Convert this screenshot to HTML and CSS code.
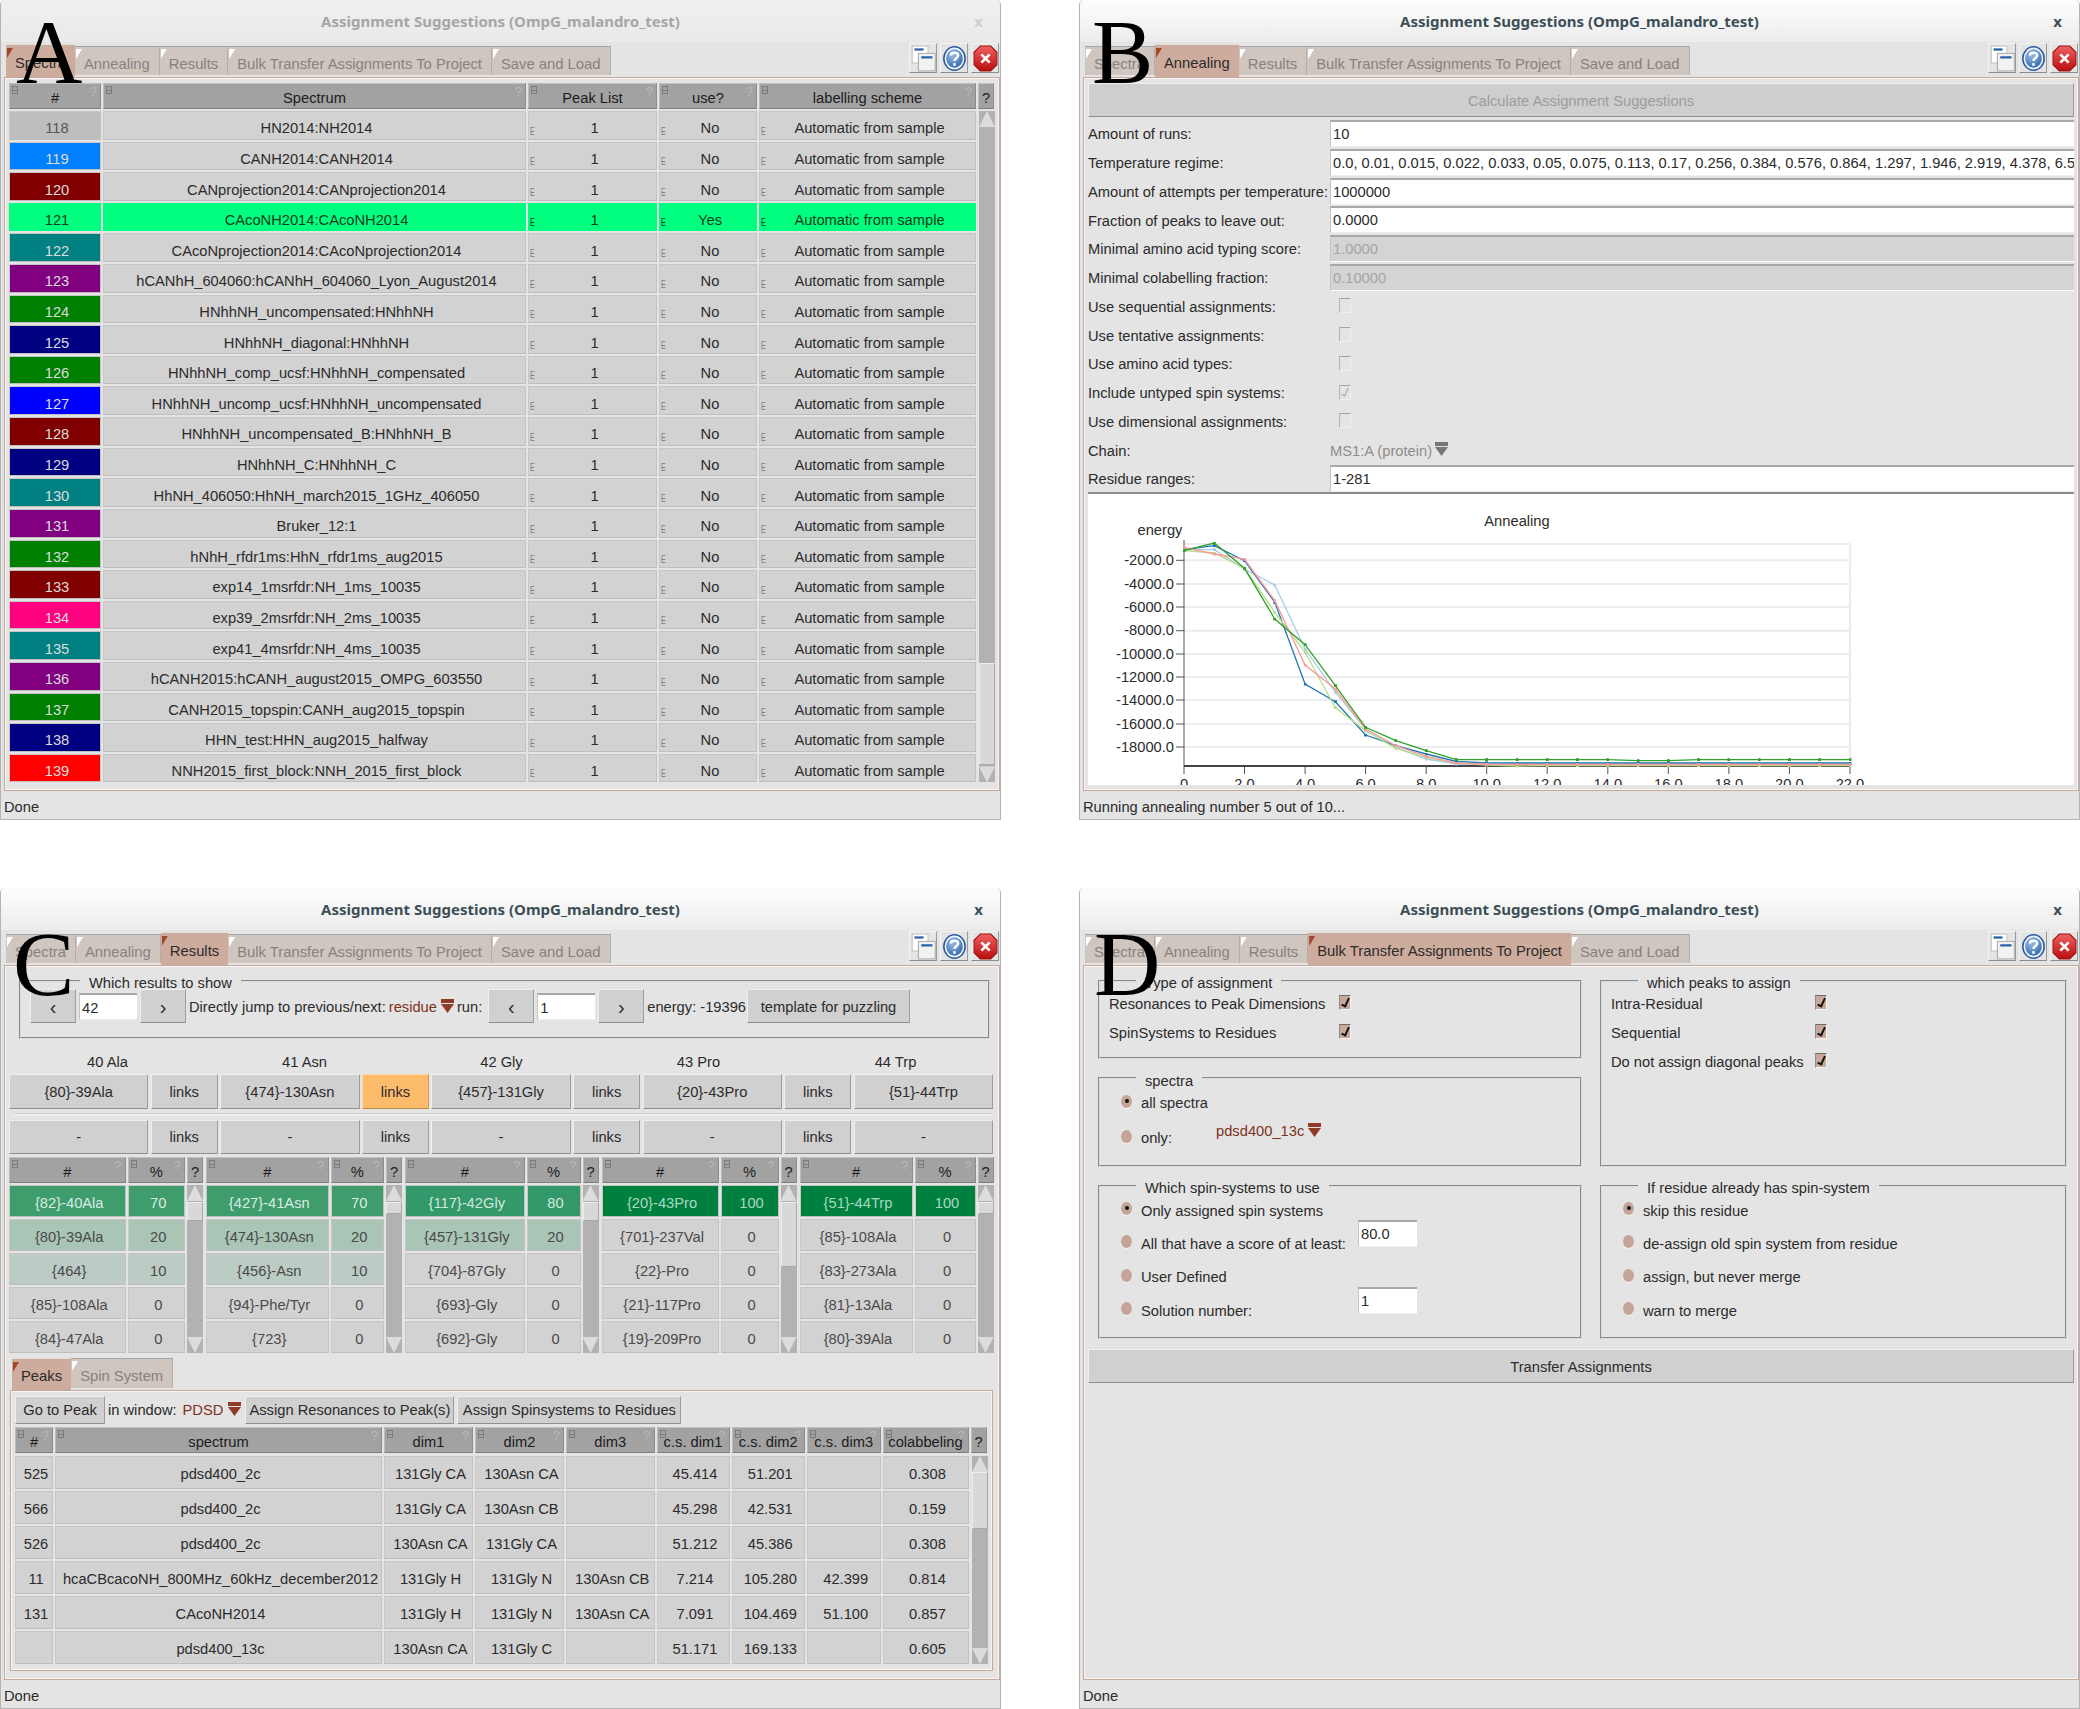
FILE: index.html
```html
<!DOCTYPE html>
<html>

<head>
    <title>Assignment Suggestions</title>
    <link rel="stylesheet" href="styles.css">
</head>

<body>
    <svg class="defs">
        <defs>
            <radialGradient id="blue-ball" cx="40%" cy="30%" r="80%">
                <stop offset="0" stop-color="#9cc0e8"/>
                <stop offset="1" stop-color="#2a62a8"/>
            </radialGradient>
            <linearGradient id="red-ball" x1="0" y1="0" x2="0" y2="1">
                <stop offset="0" stop-color="#f06060"/>
                <stop offset="1" stop-color="#b80f0f"/>
            </linearGradient>
            <symbol id="i-windows" viewBox="0 0 22 24">
                <rect x="1" y="1" width="14" height="15" fill="#fff" stroke="#c8c8c8"/>
                <rect x="3" y="3" width="8" height="2" fill="#2d5fa8"/>
                <rect x="6.500" y="7.500" width="15" height="15.500" fill="#f2f2f2" stroke="#b0b0b0"/>
                <rect x="9" y="10" width="10" height="2" fill="#2d5fa8"/>
            </symbol>
            <symbol id="i-help" viewBox="0 0 24 26">
                <ellipse cx="12" cy="13" rx="11" ry="12" fill="#2a5a9c"/>
                <ellipse cx="12" cy="13" rx="9.500" ry="10.500" fill="#eef4fb"/>
                <ellipse cx="12" cy="13" rx="8" ry="9" fill="url(#blue-ball)"/>
                <path d="M8.500 10 C8.500 6.500 15.500 6.500 15.500 10 C15.500 12.500 12 12.500 12 15.500" fill="none" stroke="#fff" stroke-width="2.400"/>
                <rect x="10.800" y="17.500" width="2.400" height="2.500" fill="#fff"/>
            </symbol>
            <symbol id="i-close" viewBox="0 0 24 26">
                <polygon points="7,1 17,1 23,7 23,19 17,25 7,25 1,19 1,7" fill="url(#red-ball)" stroke="#a01010"/>
                <path d="M8 9 L16 17 M16 9 L8 17" stroke="#fff" stroke-width="2.600"/>
            </symbol>
            <symbol id="i-pull" viewBox="0 0 13 14">
                <rect x="0" y="0" width="13" height="4" fill="currentColor"/>
                <polygon points="0,5 13,5 6.500,14" fill="currentColor"/>
            </symbol>
            <marker id="m1" markerWidth="3" markerHeight="3" refX="1.500" refY="1.500" markerUnits="userSpaceOnUse"><rect width="3" height="3" fill="#1f78b4"/></marker>
            <marker id="m2" markerWidth="3" markerHeight="3" refX="1.500" refY="1.500" markerUnits="userSpaceOnUse"><rect width="3" height="3" fill="#a6cee3"/></marker>
            <marker id="m3" markerWidth="3" markerHeight="3" refX="1.500" refY="1.500" markerUnits="userSpaceOnUse"><rect width="3" height="3" fill="#33a02c"/></marker>
            <marker id="m4" markerWidth="3" markerHeight="3" refX="1.500" refY="1.500" markerUnits="userSpaceOnUse"><rect width="3" height="3" fill="#b2df8a"/></marker>
            <marker id="m5" markerWidth="3" markerHeight="3" refX="1.500" refY="1.500" markerUnits="userSpaceOnUse"><rect width="3" height="3" fill="#fb9a99"/></marker>
        </defs>
    </svg>

    <div class="sheet">

        <!-- A: spectra tab, window not focused -->
        <div class="window inactive">
            <div class="big-letter letter-a">A</div>
            <div class="titlebar"><span></span><div class="title">Assignment Suggestions (OmpG_malandro_test)</div><div class="win-x">x</div></div>
            <div class="tabbar">
                <div class="tab on">Spectra</div>
                <div class="tab">Annealing</div>
                <div class="tab">Results</div>
                <div class="tab">Bulk Transfer Assignments To Project</div>
                <div class="tab">Save and Load</div>
                <div class="tools">
                    <div class="tool"><svg class="tool-icon"><use href="#i-windows"/></svg></div>
                    <div class="tool"><svg class="tool-icon"><use href="#i-help"/></svg></div>
                    <div class="tool"><svg class="tool-icon"><use href="#i-close"/></svg></div>
                </div>
            </div>
            <div class="panel">
                <div class="table spectra">
                    <div class="tr head">
                        <div class="th">#</div>
                        <div class="th">Spectrum</div>
                        <div class="th">Peak List</div>
                        <div class="th">use?</div>
                        <div class="th">labelling scheme</div>
                        <div class="th plain">?</div>
                    </div>
                    <div class="tbody">
                        <div class="rows">
                            <div class="tr"><div class="td sw c-silver">118</div><div class="td">HN2014:NH2014</div><div class="td e">1</div><div class="td e">No</div><div class="td e">Automatic from sample</div></div>
                            <div class="tr"><div class="td sw c-azure">119</div><div class="td">CANH2014:CANH2014</div><div class="td e">1</div><div class="td e">No</div><div class="td e">Automatic from sample</div></div>
                            <div class="tr"><div class="td sw c-maroon">120</div><div class="td">CANprojection2014:CANprojection2014</div><div class="td e">1</div><div class="td e">No</div><div class="td e">Automatic from sample</div></div>
                            <div class="tr picked"><div class="td">121</div><div class="td">CAcoNH2014:CAcoNH2014</div><div class="td e">1</div><div class="td e">Yes</div><div class="td e">Automatic from sample</div></div>
                            <div class="tr"><div class="td sw c-teal">122</div><div class="td">CAcoNprojection2014:CAcoNprojection2014</div><div class="td e">1</div><div class="td e">No</div><div class="td e">Automatic from sample</div></div>
                            <div class="tr"><div class="td sw c-purple">123</div><div class="td">hCANhH_604060:hCANhH_604060_Lyon_August2014</div><div class="td e">1</div><div class="td e">No</div><div class="td e">Automatic from sample</div></div>
                            <div class="tr"><div class="td sw c-green">124</div><div class="td">HNhhNH_uncompensated:HNhhNH</div><div class="td e">1</div><div class="td e">No</div><div class="td e">Automatic from sample</div></div>
                            <div class="tr"><div class="td sw c-navy">125</div><div class="td">HNhhNH_diagonal:HNhhNH</div><div class="td e">1</div><div class="td e">No</div><div class="td e">Automatic from sample</div></div>
                            <div class="tr"><div class="td sw c-green">126</div><div class="td">HNhhNH_comp_ucsf:HNhhNH_compensated</div><div class="td e">1</div><div class="td e">No</div><div class="td e">Automatic from sample</div></div>
                            <div class="tr"><div class="td sw c-blue">127</div><div class="td">HNhhNH_uncomp_ucsf:HNhhNH_uncompensated</div><div class="td e">1</div><div class="td e">No</div><div class="td e">Automatic from sample</div></div>
                            <div class="tr"><div class="td sw c-maroon">128</div><div class="td">HNhhNH_uncompensated_B:HNhhNH_B</div><div class="td e">1</div><div class="td e">No</div><div class="td e">Automatic from sample</div></div>
                            <div class="tr"><div class="td sw c-navy">129</div><div class="td">HNhhNH_C:HNhhNH_C</div><div class="td e">1</div><div class="td e">No</div><div class="td e">Automatic from sample</div></div>
                            <div class="tr"><div class="td sw c-teal">130</div><div class="td">HhNH_406050:HhNH_march2015_1GHz_406050</div><div class="td e">1</div><div class="td e">No</div><div class="td e">Automatic from sample</div></div>
                            <div class="tr"><div class="td sw c-purple">131</div><div class="td">Bruker_12:1</div><div class="td e">1</div><div class="td e">No</div><div class="td e">Automatic from sample</div></div>
                            <div class="tr"><div class="td sw c-green">132</div><div class="td">hNhH_rfdr1ms:HhN_rfdr1ms_aug2015</div><div class="td e">1</div><div class="td e">No</div><div class="td e">Automatic from sample</div></div>
                            <div class="tr"><div class="td sw c-maroon">133</div><div class="td">exp14_1msrfdr:NH_1ms_10035</div><div class="td e">1</div><div class="td e">No</div><div class="td e">Automatic from sample</div></div>
                            <div class="tr"><div class="td sw c-pink">134</div><div class="td">exp39_2msrfdr:NH_2ms_10035</div><div class="td e">1</div><div class="td e">No</div><div class="td e">Automatic from sample</div></div>
                            <div class="tr"><div class="td sw c-teal">135</div><div class="td">exp41_4msrfdr:NH_4ms_10035</div><div class="td e">1</div><div class="td e">No</div><div class="td e">Automatic from sample</div></div>
                            <div class="tr"><div class="td sw c-purple">136</div><div class="td">hCANH2015:hCANH_august2015_OMPG_603550</div><div class="td e">1</div><div class="td e">No</div><div class="td e">Automatic from sample</div></div>
                            <div class="tr"><div class="td sw c-green">137</div><div class="td">CANH2015_topspin:CANH_aug2015_topspin</div><div class="td e">1</div><div class="td e">No</div><div class="td e">Automatic from sample</div></div>
                            <div class="tr"><div class="td sw c-navy">138</div><div class="td">HHN_test:HHN_aug2015_halfway</div><div class="td e">1</div><div class="td e">No</div><div class="td e">Automatic from sample</div></div>
                            <div class="tr"><div class="td sw c-red">139</div><div class="td">NNH2015_first_block:NNH_2015_first_block</div><div class="td e">1</div><div class="td e">No</div><div class="td e">Automatic from sample</div></div>
                        </div>
                        <div class="scroll"><i class="up"></i><b class="thumb thumb-spectra"></b><i class="down"></i></div>
                    </div>
                </div>
            </div>
            <div class="status">Done</div>
        </div>

        <!-- B: annealing tab -->
        <div class="window">
            <div class="big-letter letter-b">B</div>
            <div class="titlebar"><span></span><div class="title">Assignment Suggestions (OmpG_malandro_test)</div><div class="win-x">x</div></div>
            <div class="tabbar">
                <div class="tab">Spectra</div>
                <div class="tab on">Annealing</div>
                <div class="tab">Results</div>
                <div class="tab">Bulk Transfer Assignments To Project</div>
                <div class="tab">Save and Load</div>
                <div class="tools">
                    <div class="tool"><svg class="tool-icon"><use href="#i-windows"/></svg></div>
                    <div class="tool"><svg class="tool-icon"><use href="#i-help"/></svg></div>
                    <div class="tool"><svg class="tool-icon"><use href="#i-close"/></svg></div>
                </div>
            </div>
            <div class="panel annealing">
                <div class="btn wide disabled">Calculate Assignment Suggestions</div>
                <div class="form">
                    <div class="label">Amount of runs:</div><div class="entry">10</div>
                    <div class="label">Temperature regime:</div><div class="entry">0.0, 0.01, 0.015, 0.022, 0.033, 0.05, 0.075, 0.113, 0.17, 0.256, 0.384, 0.576, 0.864, 1.297, 1.946, 2.919, 4.378, 6.568, 9.852</div>
                    <div class="label">Amount of attempts per temperature:</div><div class="entry">1000000</div>
                    <div class="label">Fraction of peaks to leave out:</div><div class="entry">0.0000</div>
                    <div class="label">Minimal amino acid typing score:</div><div class="entry off">1.0000</div>
                    <div class="label">Minimal colabelling fraction:</div><div class="entry off">0.10000</div>
                    <div class="label">Use sequential assignments:</div><div class="box-cell"><span class="check off"></span></div>
                    <div class="label">Use tentative assignments:</div><div class="box-cell"><span class="check off"></span></div>
                    <div class="label">Use amino acid types:</div><div class="box-cell"><span class="check off"></span></div>
                    <div class="label">Include untyped spin systems:</div><div class="box-cell"><span class="check off ticked"></span></div>
                    <div class="label">Use dimensional assignments:</div><div class="box-cell"><span class="check off"></span></div>
                    <div class="label">Chain:</div><div class="pull-cell grey">MS1:A (protein) <svg class="pull"><use href="#i-pull"/></svg></div>
                    <div class="label">Residue ranges:</div><div class="entry">1-281</div>
                </div>
                <div class="chart">
                    <svg class="plot" width="984" height="294">
                        <g class="plot-grid">
                            <path d="M96 52H762M762 52V274"/>
                            <path d="M96 68.300H762M96 92H762M96 115H762M96 138.700H762M96 162H762M96 185H762M96 208H762M96 232H762M96 255H762"/>
                        </g>
                        <g class="plot-axis">
                            <path d="M96 48V274M88 68.300H96M88 92H96M88 115H96M88 138.700H96M88 162H96M88 185H96M88 208H96M88 232H96M88 255H96"/>
                            <path d="M96 274V282M156.500 274V282M217.100 274V282M277.600 274V282M338.200 274V282M398.700 274V282M459.200 274V282M519.800 274V282M580.300 274V282M640.900 274V282M701.400 274V282M762 274V282"/>
                            <path class="plot-base" d="M96 274H762"/>
                        </g>
                        <polyline class="run" stroke="#a6cee3" marker-start="url(#m2)" marker-mid="url(#m2)" marker-end="url(#m2)" points="96,57.700 126.300,57.700 156.500,77 186.800,93 217.100,157 247.400,200.300 277.600,237 307.900,255.300 338.200,267 368.400,272 398.700,272 429,271.500 459.200,271.500 489.500,271.500 519.800,271.500 550,271.500 580.300,271.500 610.600,271.500 640.900,271.500 671.100,271.500 701.400,271.500 731.700,271.500 762,271.500"/>
                        <polyline class="run" stroke="#1f78b4" marker-start="url(#m1)" marker-mid="url(#m1)" marker-end="url(#m1)" points="96,57.700 126.300,53.700 156.500,68.700 186.800,110.300 217.100,192 247.400,209.700 277.600,243 307.900,253.700 338.200,262 368.400,269.500 398.700,270.800 429,271 459.200,271 489.500,271 519.800,271 550,271 580.300,271 610.600,271 640.900,271 671.100,271 701.400,271 731.700,271 762,271"/>
                        <polyline class="run" stroke="#b2df8a" marker-start="url(#m4)" marker-mid="url(#m4)" marker-end="url(#m4)" points="96,58.700 126.300,61 156.500,76.300 186.800,120.300 217.100,160.300 247.400,215.700 277.600,238.700 307.900,256.300 338.200,265.300 368.400,271 398.700,273 429,274 459.200,273.500 489.500,273.500 519.800,273.500 550,273.500 580.300,273.500 610.600,273.500 640.900,273.500 671.100,273.500 701.400,273.500 731.700,273.500 762,273.500"/>
                        <polyline class="run" stroke="#fb9a99" marker-start="url(#m5)" marker-mid="url(#m5)" marker-end="url(#m5)" points="96,55.300 126.300,62 156.500,67 186.800,108.700 217.100,173 247.400,197 277.600,237 307.900,253.700 338.200,264.300 368.400,271 398.700,272.500 429,272.500 459.200,272.500 489.500,272.500 519.800,272.500 550,272.500 580.300,272.500 610.600,272.500 640.900,272.500 671.100,272.500 701.400,272.500 731.700,272.500 762,272.500"/>
                        <polyline class="run" stroke="#33a02c" marker-start="url(#m3)" marker-mid="url(#m3)" marker-end="url(#m3)" points="96,58.700 126.300,51 156.500,76.300 186.800,127 217.100,152.700 247.400,193.700 277.600,235.300 307.900,248.700 338.200,258.700 368.400,267.700 398.700,267.700 429,267.700 459.200,267.700 489.500,267.700 519.800,267.700 550,268.700 580.300,268.700 610.600,267.700 640.900,267.700 671.100,267.700 701.400,267.700 731.700,267.700 762,267.700"/>
                        <g class="plot-text">
                            <text x="429" y="34" text-anchor="middle">Annealing</text>
                            <text x="72" y="43" text-anchor="middle">energy</text>
                            <g text-anchor="end">
                                <text x="86" y="73">-2000.0</text>
                                <text x="86" y="97">-4000.0</text>
                                <text x="86" y="120">-6000.0</text>
                                <text x="86" y="143">-8000.0</text>
                                <text x="86" y="167">-10000.0</text>
                                <text x="86" y="190">-12000.0</text>
                                <text x="86" y="213">-14000.0</text>
                                <text x="86" y="237">-16000.0</text>
                                <text x="86" y="260">-18000.0</text>
                            </g>
                            <g text-anchor="middle">
                                <text x="96" y="297">0</text>
                                <text x="156.500" y="297">2.0</text>
                                <text x="217.100" y="297">4.0</text>
                                <text x="277.600" y="297">6.0</text>
                                <text x="338.200" y="297">8.0</text>
                                <text x="398.700" y="297">10.0</text>
                                <text x="459.200" y="297">12.0</text>
                                <text x="519.800" y="297">14.0</text>
                                <text x="580.300" y="297">16.0</text>
                                <text x="640.900" y="297">18.0</text>
                                <text x="701.400" y="297">20.0</text>
                                <text x="762" y="297">22.0</text>
                            </g>
                        </g>
                    </svg>
                </div>
            </div>
            <div class="status">Running annealing number 5 out of 10...</div>
        </div>

        <!-- C: results tab -->
        <div class="window">
            <div class="big-letter letter-c">C</div>
            <div class="titlebar"><span></span><div class="title">Assignment Suggestions (OmpG_malandro_test)</div><div class="win-x">x</div></div>
            <div class="tabbar">
                <div class="tab">Spectra</div>
                <div class="tab">Annealing</div>
                <div class="tab on">Results</div>
                <div class="tab">Bulk Transfer Assignments To Project</div>
                <div class="tab">Save and Load</div>
                <div class="tools">
                    <div class="tool"><svg class="tool-icon"><use href="#i-windows"/></svg></div>
                    <div class="tool"><svg class="tool-icon"><use href="#i-help"/></svg></div>
                    <div class="tool"><svg class="tool-icon"><use href="#i-close"/></svg></div>
                </div>
            </div>
            <div class="panel results">
                <fieldset class="frame show-frame">
                    <legend>Which results to show</legend>
                    <div class="btn nav">&lsaquo;</div>
                    <div class="entry small-entry">42</div>
                    <div class="btn nav">&rsaquo;</div>
                    <span class="txt">Directly jump to previous/next:</span>
                    <span class="pick">residue <svg class="pull"><use href="#i-pull"/></svg></span>
                    <span class="txt">run:</span>
                    <div class="btn nav nav-run">&lsaquo;</div>
                    <div class="entry small-entry">1</div>
                    <div class="btn nav">&rsaquo;</div>
                    <span class="txt">energy: -19396</span>
                    <div class="btn puzzle">template for puzzling</div>
                </fieldset>

                <div class="residues">
                    <div>40 Ala</div><div>41 Asn</div><div>42 Gly</div><div>43 Pro</div><div>44 Trp</div>
                </div>
                <div class="cands">
                    <div class="btn">{80}-39Ala</div><div class="btn">links</div>
                    <div class="btn">{474}-130Asn</div><div class="btn orange">links</div>
                    <div class="btn">{457}-131Gly</div><div class="btn">links</div>
                    <div class="btn">{20}-43Pro</div><div class="btn">links</div>
                    <div class="btn">{51}-44Trp</div>
                </div>
                <div class="sep"></div>
                <div class="cands second">
                    <div class="btn">-</div><div class="btn">links</div>
                    <div class="btn">-</div><div class="btn">links</div>
                    <div class="btn">-</div><div class="btn">links</div>
                    <div class="btn">-</div><div class="btn">links</div>
                    <div class="btn">-</div>
                </div>

                <div class="scores">
                    <div class="table score score-1">
                        <div class="tr head"><div class="th">#</div><div class="th">%</div><div class="th plain">?</div></div>
                        <div class="tbody">
                            <div class="rows">
                                <div class="tr g70"><div class="td">{82}-40Ala</div><div class="td">70</div></div>
                                <div class="tr g20"><div class="td">{80}-39Ala</div><div class="td">20</div></div>
                                <div class="tr g10"><div class="td">{464}</div><div class="td">10</div></div>
                                <div class="tr"><div class="td">{85}-108Ala</div><div class="td">0</div></div>
                                <div class="tr"><div class="td">{84}-47Ala</div><div class="td">0</div></div>
                            </div>
                            <div class="scroll"><i class="up"></i><b class="thumb thumb-short"></b><i class="down"></i></div>
                        </div>
                    </div>
                    <div class="table score score-2">
                        <div class="tr head"><div class="th">#</div><div class="th">%</div><div class="th plain">?</div></div>
                        <div class="tbody">
                            <div class="rows">
                                <div class="tr g70"><div class="td">{427}-41Asn</div><div class="td">70</div></div>
                                <div class="tr g20"><div class="td">{474}-130Asn</div><div class="td">20</div></div>
                                <div class="tr g10"><div class="td">{456}-Asn</div><div class="td">10</div></div>
                                <div class="tr"><div class="td">{94}-Phe/Tyr</div><div class="td">0</div></div>
                                <div class="tr"><div class="td">{723}</div><div class="td">0</div></div>
                            </div>
                            <div class="scroll"><i class="up"></i><b class="thumb thumb-mini"></b><i class="down"></i></div>
                        </div>
                    </div>
                    <div class="table score score-3">
                        <div class="tr head"><div class="th">#</div><div class="th">%</div><div class="th plain">?</div></div>
                        <div class="tbody">
                            <div class="rows">
                                <div class="tr g80"><div class="td">{117}-42Gly</div><div class="td">80</div></div>
                                <div class="tr g20"><div class="td">{457}-131Gly</div><div class="td">20</div></div>
                                <div class="tr"><div class="td">{704}-87Gly</div><div class="td">0</div></div>
                                <div class="tr"><div class="td">{693}-Gly</div><div class="td">0</div></div>
                                <div class="tr"><div class="td">{692}-Gly</div><div class="td">0</div></div>
                            </div>
                            <div class="scroll"><i class="up"></i><b class="thumb thumb-short"></b><i class="down"></i></div>
                        </div>
                    </div>
                    <div class="table score score-4">
                        <div class="tr head"><div class="th">#</div><div class="th">%</div><div class="th plain">?</div></div>
                        <div class="tbody">
                            <div class="rows">
                                <div class="tr g100"><div class="td">{20}-43Pro</div><div class="td">100</div></div>
                                <div class="tr"><div class="td">{701}-237Val</div><div class="td">0</div></div>
                                <div class="tr"><div class="td">{22}-Pro</div><div class="td">0</div></div>
                                <div class="tr"><div class="td">{21}-117Pro</div><div class="td">0</div></div>
                                <div class="tr"><div class="td">{19}-209Pro</div><div class="td">0</div></div>
                            </div>
                            <div class="scroll"><i class="up"></i><b class="thumb thumb-long"></b><i class="down"></i></div>
                        </div>
                    </div>
                    <div class="table score score-5">
                        <div class="tr head"><div class="th">#</div><div class="th">%</div><div class="th plain">?</div></div>
                        <div class="tbody">
                            <div class="rows">
                                <div class="tr g100"><div class="td">{51}-44Trp</div><div class="td">100</div></div>
                                <div class="tr"><div class="td">{85}-108Ala</div><div class="td">0</div></div>
                                <div class="tr"><div class="td">{83}-273Ala</div><div class="td">0</div></div>
                                <div class="tr"><div class="td">{81}-13Ala</div><div class="td">0</div></div>
                                <div class="tr"><div class="td">{80}-39Ala</div><div class="td">0</div></div>
                            </div>
                            <div class="scroll"><i class="up"></i><b class="thumb thumb-mini"></b><i class="down"></i></div>
                        </div>
                    </div>
                </div>

                <div class="subtabs">
                    <div class="tab on">Peaks</div>
                    <div class="tab">Spin System</div>
                </div>
                <div class="subpanel">
                    <div class="peak-bar">
                        <div class="btn go">Go to Peak</div>
                        <span class="txt">in window:</span>
                        <span class="pick">PDSD <svg class="pull"><use href="#i-pull"/></svg></span>
                        <div class="btn assign-a">Assign Resonances to Peak(s)</div>
                        <div class="btn assign-b">Assign Spinsystems to Residues</div>
                    </div>
                    <div class="table peaks">
                        <div class="tr head">
                            <div class="th">#</div>
                            <div class="th">spectrum</div>
                            <div class="th">dim1</div>
                            <div class="th">dim2</div>
                            <div class="th">dim3</div>
                            <div class="th">c.s. dim1</div>
                            <div class="th">c.s. dim2</div>
                            <div class="th">c.s. dim3</div>
                            <div class="th">colabbeling</div>
                            <div class="th plain">?</div>
                        </div>
                        <div class="tbody">
                            <div class="rows">
                                <div class="tr"><div class="td">525</div><div class="td">pdsd400_2c</div><div class="td">131Gly CA</div><div class="td">130Asn CA</div><div class="td"></div><div class="td">45.414</div><div class="td">51.201</div><div class="td"></div><div class="td">0.308</div></div>
                                <div class="tr"><div class="td">566</div><div class="td">pdsd400_2c</div><div class="td">131Gly CA</div><div class="td">130Asn CB</div><div class="td"></div><div class="td">45.298</div><div class="td">42.531</div><div class="td"></div><div class="td">0.159</div></div>
                                <div class="tr"><div class="td">526</div><div class="td">pdsd400_2c</div><div class="td">130Asn CA</div><div class="td">131Gly CA</div><div class="td"></div><div class="td">51.212</div><div class="td">45.386</div><div class="td"></div><div class="td">0.308</div></div>
                                <div class="tr"><div class="td">11</div><div class="td">hcaCBcacoNH_800MHz_60kHz_december2012</div><div class="td">131Gly H</div><div class="td">131Gly N</div><div class="td">130Asn CB</div><div class="td">7.214</div><div class="td">105.280</div><div class="td">42.399</div><div class="td">0.814</div></div>
                                <div class="tr"><div class="td">131</div><div class="td">CAcoNH2014</div><div class="td">131Gly H</div><div class="td">131Gly N</div><div class="td">130Asn CA</div><div class="td">7.091</div><div class="td">104.469</div><div class="td">51.100</div><div class="td">0.857</div></div>
                                <div class="tr"><div class="td"></div><div class="td">pdsd400_13c</div><div class="td">130Asn CA</div><div class="td">131Gly C</div><div class="td"></div><div class="td">51.171</div><div class="td">169.133</div><div class="td"></div><div class="td">0.605</div></div>
                            </div>
                            <div class="scroll"><i class="up"></i><b class="thumb thumb-peaks"></b><i class="down"></i></div>
                        </div>
                    </div>
                </div>
            </div>
            <div class="status">Done</div>
        </div>

        <!-- D: bulk transfer tab -->
        <div class="window">
            <div class="big-letter letter-d">D</div>
            <div class="titlebar"><span></span><div class="title">Assignment Suggestions (OmpG_malandro_test)</div><div class="win-x">x</div></div>
            <div class="tabbar">
                <div class="tab">Spectra</div>
                <div class="tab">Annealing</div>
                <div class="tab">Results</div>
                <div class="tab on">Bulk Transfer Assignments To Project</div>
                <div class="tab">Save and Load</div>
                <div class="tools">
                    <div class="tool"><svg class="tool-icon"><use href="#i-windows"/></svg></div>
                    <div class="tool"><svg class="tool-icon"><use href="#i-help"/></svg></div>
                    <div class="tool"><svg class="tool-icon"><use href="#i-close"/></svg></div>
                </div>
            </div>
            <div class="panel bulk">
                <div class="bulk-grid">
                    <fieldset class="frame type-frame">
                        <legend>Type of assignment</legend>
                        <div class="opt-row"><span class="opt-label">Resonances to Peak Dimensions</span><span class="check ticked"></span></div>
                        <div class="opt-row"><span class="opt-label">SpinSystems to Residues</span><span class="check ticked"></span></div>
                    </fieldset>
                    <fieldset class="frame which-frame">
                        <legend>which peaks to assign</legend>
                        <div class="opt-row"><span class="opt-label">Intra-Residual</span><span class="check ticked"></span></div>
                        <div class="opt-row"><span class="opt-label">Sequential</span><span class="check ticked"></span></div>
                        <div class="opt-row"><span class="opt-label">Do not assign diagonal peaks</span><span class="check ticked"></span></div>
                    </fieldset>
                    <fieldset class="frame spectra-frame">
                        <legend>spectra</legend>
                        <div class="radio-row"><span class="radio chosen"></span>all spectra</div>
                        <div class="radio-row only-row"><span class="radio"></span>only:<span class="pick only-pick">pdsd400_13c <svg class="pull"><use href="#i-pull"/></svg></span></div>
                    </fieldset>
                    <fieldset class="frame spin-frame">
                        <legend>Which spin-systems to use</legend>
                        <div class="radio-row"><span class="radio chosen"></span>Only assigned spin systems</div>
                        <div class="radio-row"><span class="radio"></span><span class="spin-label">All that have a score of at least:</span><div class="entry spin-entry">80.0</div></div>
                        <div class="radio-row"><span class="radio"></span>User Defined</div>
                        <div class="radio-row"><span class="radio"></span><span class="spin-label">Solution number:</span><div class="entry spin-entry">1</div></div>
                    </fieldset>
                    <fieldset class="frame merge-frame">
                        <legend>If residue already has spin-system</legend>
                        <div class="radio-row"><span class="radio chosen"></span>skip this residue</div>
                        <div class="radio-row"><span class="radio"></span>de-assign old spin system from residue</div>
                        <div class="radio-row"><span class="radio"></span>assign, but never merge</div>
                        <div class="radio-row"><span class="radio"></span>warn to merge</div>
                    </fieldset>
                </div>
                <div class="btn wide transfer">Transfer Assignments</div>
            </div>
            <div class="status">Done</div>
        </div>

    </div>
</body>

</html>
```

FILE: styles.css
```css
body {
    margin: 0;
    background-color: white;
    font-family: "Liberation Sans", Arial, sans-serif;
    font-size: 14.700px;
    color: #2b2b2b;
}

.defs {
    position: absolute;
    width: 0;
    height: 0;
}

.sheet {
    display: grid;
    grid-template-columns: 1001px 1001px;
    grid-template-rows: 820px 821px;
    column-gap: 78px;
    row-gap: 68px;
}

/* Window frame */
.window {
    position: relative;
    display: flex;
    flex-direction: column;
    box-sizing: border-box;
    overflow: hidden;
    background-color: #e4e4e4;
    border: 1px solid #b4b4b4;
    border-top: none;
    border-radius: 5px 5px 0 0;
}

.big-letter {
    position: absolute;
    z-index: 5;
    font-family: "Liberation Serif", "Times New Roman", serif;
    font-size: 92px;
    line-height: 92px;
    color: black;
}

.letter-a { left: 15px; top: 6px; }
.letter-b { left: 12px; top: 6px; }
.letter-c { left: 12px; top: 30px; }
.letter-d { left: 14px; top: 30px; }

.titlebar {
    display: grid;
    grid-template-columns: 1fr auto 1fr;
    align-items: center;
    height: 42px;
    flex-shrink: 0;
    background: linear-gradient(#fdfdfd, #ececec);
}

.title {
    font-family: "Noto Sans", sans-serif;
    font-weight: bold;
    font-size: 15px;
    color: #3d4f56;
}

.win-x {
    justify-self: end;
    margin-right: 17px;
    font-family: "Noto Sans", sans-serif;
    font-weight: bold;
    font-size: 15px;
    color: #3d4f56;
}

.inactive .titlebar {
    background: linear-gradient(#f0f0f0, #e9e9e9);
}

.inactive .title {
    color: #a6a6a6;
}

.inactive .win-x {
    color: #cfcfcf;
}

/* Tabs */
.tabbar {
    display: flex;
    box-sizing: border-box;
    height: 35px;
    flex-shrink: 0;
    padding: 4px 0 2px 5px;
}

.tab {
    position: relative;
    display: flex;
    align-items: center;
    padding: 5px 9px 0;
    font-size: 14.800px;
    background-color: #cfc6c0;
    border-top: 1px solid #a9a5a2;
    border-right: 1px solid #b3aeaa;
    color: #85827f;
}

.tab::before {
    content: "";
    position: absolute;
    left: 1px;
    top: 2px;
    width: 6px;
    height: 10px;
    background-color: white;
    clip-path: polygon(0 0, 100% 0, 0 100%);
}

.tab.on {
    margin-top: -2px;
    margin-bottom: -2px;
    padding-top: 3px;
    background-color: #ceac9d;
    border-top: 1px solid #e8dcd6;
    border-right: none;
    color: #2b2b2b;
}

.tab.on::before {
    top: 3px;
    background-color: #a0472c;
}

.tools {
    display: flex;
    gap: 3px;
    margin-left: auto;
    margin-top: -3px;
    margin-right: 1px;
}

.tool {
    display: flex;
    align-items: center;
    justify-content: center;
    box-sizing: border-box;
    width: 28px;
    height: 30px;
    border: 1px solid;
    border-color: #f4f4f4 #9a9a9a #8c8c8c #f4f4f4;
}

.tool-icon {
    width: 25px;
    height: 27px;
}

/* Main panel under the tabs */
.panel {
    display: flex;
    flex-direction: column;
    box-sizing: border-box;
    flex: 1;
    min-height: 0;
    margin: 0 0 0 3px;
    padding: 5px 4px 0;
    border: 1px solid #c8a899;
    box-shadow: inset 0 0 0 1px #f6f6f6;
}

.status {
    display: flex;
    align-items: center;
    box-sizing: border-box;
    height: 28px;
    flex-shrink: 0;
    padding: 3px 0 0 3px;
}

/* Tables */
.tbody {
    display: flex;
    gap: 2px;
}

.rows {
    display: grid;
    row-gap: 2px;
    flex: 1;
}

.tr {
    display: grid;
    column-gap: 2px;
}

.head {
    margin-bottom: 2px;
}

.th {
    position: relative;
    display: flex;
    align-items: center;
    justify-content: center;
    box-sizing: border-box;
    padding-top: 4px;
    background-color: #a2a2a2;
    border: 1px solid;
    border-color: #c0c0c0 #8c8c8c #7e7e7e #bcbcbc;
    color: #1c1c1c;
}

.th::before {
    content: "";
    position: absolute;
    left: 2px;
    top: 2px;
    width: 4px;
    height: 6px;
    border: 1px solid #7c7c7c;
    background: linear-gradient(transparent 45%, #7c7c7c 45%, #7c7c7c 60%, transparent 60%);
}

.th::after {
    content: "?";
    position: absolute;
    right: 3px;
    top: 1px;
    font-size: 13px;
    line-height: 14px;
    color: #b9b9b9;
}

.th.plain::before,
.th.plain::after {
    display: none;
}

.td {
    position: relative;
    display: flex;
    align-items: center;
    justify-content: center;
    box-sizing: border-box;
    min-width: 0;
    padding: 3px 0 0 4px;
    white-space: nowrap;
    background-color: #d2d2d2;
    border: 1px solid;
    border-color: #c6c6c6 #c2c2c2 #bebebe #c8c8c8;
}

.e::before {
    content: "E";
    position: absolute;
    left: 1px;
    bottom: 2px;
    font-size: 10px;
    line-height: 10px;
    color: #7c7c7c;
    transform: scaleX(0.7);
    transform-origin: left;
}

.scroll {
    display: flex;
    flex-direction: column;
    flex-shrink: 0;
    width: 16px;
    background-color: #b2b2b2;
}

.up,
.down {
    flex-shrink: 0;
    height: 16px;
    background-color: #dcdcdc;
}

.up {
    clip-path: polygon(50% 0, 100% 100%, 0 100%);
}

.down {
    margin-top: auto;
    clip-path: polygon(0 0, 100% 0, 50% 100%);
}

.thumb {
    display: block;
    box-sizing: border-box;
    background-color: #d8d8d8;
    border: 1px solid;
    border-color: #ececec #a8a8a8 #a8a8a8 #ececec;
}

.thumb-spectra { margin-top: 536px; height: 102px; }
.thumb-short { margin-top: 1px; height: 19px; }
.thumb-mini { margin-top: 1px; height: 12px; }
.thumb-long { margin-top: 1px; height: 65px; }
.thumb-peaks { margin-top: 0; height: 57px; }

/* A: spectra list */
.spectra .tr {
    grid-template-columns: 92px 423px 129px 98px 217px;
}

.spectra .head {
    grid-template-columns: 92px 423px 129px 98px 217px 16px;
    height: 26px;
}

.spectra .rows {
    grid-auto-rows: 28.620px;
}

.spectra .td {
    padding-top: 6px;
}

.sw { color: #dcdcdc; }
.c-silver { background-color: #bebebe; color: #555; }
.c-azure { background-color: #0080ff; }
.c-maroon { background-color: #800000; }
.c-teal { background-color: #008080; }
.c-purple { background-color: #800080; }
.c-green { background-color: #008000; }
.c-navy { background-color: #000080; }
.c-blue { background-color: #0000ff; }
.c-pink { background-color: #ff0080; }
.c-red { background-color: #ff0000; }

.picked .td {
    background-color: #00ff7f;
    border-color: #00ff7f;
    color: #0b3a20;
}

.picked .e::before {
    color: #0b2a18;
}

/* Buttons */
.btn {
    display: flex;
    align-items: center;
    justify-content: center;
    box-sizing: border-box;
    background-color: #d0d0d0;
    border: 1px solid;
    border-color: #efefef #9c9c9c #8e8e8e #efefef;
    white-space: nowrap;
}

.btn.wide {
    height: 34px;
    padding-top: 2px;
    flex-shrink: 0;
}

.btn.disabled {
    background-color: #cecece;
    color: #9c9c9c;
}

.btn.orange {
    background-color: #fdbc6c;
    border-color: #ffd9a8 #c89a5c #b88a4c #ffd9a8;
}

/* B: annealing form */
.annealing .form {
    display: grid;
    grid-template-columns: 242px 1fr;
    grid-auto-rows: 28.750px;
    margin-top: 3px;
}

.label {
    display: flex;
    align-items: center;
    white-space: nowrap;
}

.entry {
    display: flex;
    align-items: center;
    box-sizing: border-box;
    height: 27px;
    min-width: 0;
    overflow: hidden;
    padding-left: 2px;
    white-space: nowrap;
    background-color: white;
    border-top: 2px solid #a8a8a8;
    border-left: 1px solid #c4c4c4;
    border-bottom: 1px solid #efefef;
}

.entry.off {
    background-color: #d4d4d4;
    border-bottom-color: white;
    color: #a4a4a4;
}

.box-cell {
    display: flex;
    align-items: center;
    padding: 0 0 2px 9px;
}

.pull-cell {
    display: flex;
    align-items: center;
    gap: 3px;
}

.grey {
    color: #8c8c8c;
}

.pull {
    width: 13px;
    height: 14px;
    margin-bottom: 3px;
    color: #8f3b25;
}

.grey .pull {
    color: #777;
}

.check {
    position: relative;
    display: inline-block;
    box-sizing: border-box;
    width: 12px;
    height: 15px;
    background-color: #c8a898;
    border: 1px solid;
    border-color: #6c6c6c #f4f4f4 #f4f4f4 #8c8c8c;
}

.check.off {
    background-color: #e4e4e4;
    border-color: #a4a4a4 #f0f0f0 #f0f0f0 #b4b4b4;
}

.check.ticked::after {
    content: "";
    position: absolute;
    left: 3px;
    top: 1px;
    width: 3px;
    height: 8px;
    border: solid #111;
    border-width: 0 2px 2px 0;
    transform: rotate(25deg);
}

.check.off.ticked::after {
    border-color: #a4a4a4;
    border-width: 0 1px 1px 0;
}

.chart {
    flex: 1;
    min-height: 0;
    overflow: hidden;
    margin: -2.250px 0 5px;
    background-color: white;
    border-top: 2px solid #8c8c8c;
}

.plot {
    display: block;
    margin-top: -2px;
}

.plot-grid path {
    fill: none;
    stroke: #ececec;
    stroke-width: 2;
}

.plot-axis path {
    fill: none;
    stroke: #555;
    stroke-width: 1;
}

.plot-axis .plot-base {
    stroke: #444;
    stroke-width: 2;
}

.run {
    fill: none;
    stroke-width: 1.300;
}

.plot-text text {
    font-family: "Liberation Sans", Arial, sans-serif;
    font-size: 14.700px;
    fill: #2b2b2b;
}

/* C: results */
.results {
    padding-top: 0;
}

.frame {
    box-sizing: border-box;
    min-width: 0;
    margin: 0;
    border: 2px groove #dcdcdc;
}

.frame legend {
    position: relative;
    top: 3px;
    padding: 0 9px;
    margin-left: 27px;
    line-height: 17px;
    white-space: nowrap;
}

.show-frame {
    display: flex;
    align-items: center;
    height: 67px;
    margin: 6px 5px 0 10px;
    padding: 0 0 1px 9px;
    gap: 3px;
}

.show-frame legend {
    margin-left: 50px;
}

.btn.nav {
    width: 46px;
    height: 34px;
    padding-top: 3px;
    font-size: 20px;
}

.nav-run {
    margin-left: 3px;
}

.small-entry {
    width: 58px;
    height: 27px;
}

.show-frame .txt,
.show-frame .pick {
    padding-top: 2px;
}

.show-frame .btn.puzzle,
.show-frame .entry {
    padding-top: 2px;
}

.txt,
.pick {
    white-space: nowrap;
}

.pick {
    display: inline-flex;
    align-items: center;
    gap: 4px;
    color: #7c3220;
}

.btn.puzzle {
    width: 163px;
    height: 34px;
    margin-left: -2px;
}

.residues {
    display: grid;
    grid-template-columns: repeat(5, 197px);
    margin-top: 10px;
    height: 25px;
    align-items: center;
    text-align: center;
}

.cands {
    display: grid;
    grid-template-columns: 139.400px 67px 139.400px 67px 139.400px 67px 139.400px 67px 139.400px;
    column-gap: 2.400px;
    height: 35px;
}

.cands.second {
    height: 34px;
}

.sep {
    height: 2px;
    margin: 4px 4px 4px 5px;
    background-color: #f0f0f0;
    border-top: 1px solid #cfcfcf;
}

.scores {
    display: flex;
    gap: 3px;
    margin-top: 3px;
}

.score .head {
    height: 26px;
    margin-bottom: 2px;
}

.score .rows {
    grid-auto-rows: 32px;
}

.score-1 .tr { grid-template-columns: 116.500px 57.500px; }
.score-1 .head { grid-template-columns: 116.500px 57.500px 16px; }
.score-2 .tr { grid-template-columns: 122.500px 53.500px; }
.score-2 .head { grid-template-columns: 122.500px 53.500px 16px; }
.score-3 .tr { grid-template-columns: 119.500px 54px; }
.score-3 .head { grid-template-columns: 119.500px 54px 16px; }
.score-4 .tr { grid-template-columns: 117px 58px; }
.score-4 .head { grid-template-columns: 117px 58px 16px; }
.score-5 .tr { grid-template-columns: 113px 61px; }
.score-5 .head { grid-template-columns: 113px 61px 16px; }

.score .td {
    color: #4a4a4a;
}

.g100 .td {
    background-color: #00803f;
    color: #a8d8c0;
}

.g80 .td {
    background-color: #33996a;
    color: #d0e8dc;
}

.g70 .td {
    background-color: #3f9c6c;
    color: #d8ece2;
}

.g20 .td {
    background-color: #a8c5b5;
}

.g10 .td {
    background-color: #bccbc4;
}

.subtabs {
    display: flex;
    height: 30px;
    margin: 5px 0 2px 3px;
}

.subtabs .tab.on {
    margin: 0 0 -2px;
}

.subpanel {
    display: flex;
    flex-direction: column;
    box-sizing: border-box;
    height: 281px;
    margin: 0 2px 0 1px;
    padding: 5px 4px 0;
    border: 1px solid #c8a899;
    box-shadow: inset 0 0 0 1px #f6f6f6;
}

.peak-bar {
    display: flex;
    align-items: center;
    height: 28px;
    gap: 3px;
}

.peak-bar .pick {
    gap: 5px;
    margin-left: 3px;
}

.peak-bar .btn {
    height: 28px;
}

.btn.go {
    width: 90px;
}

.btn.assign-a {
    width: 209px;
    margin-left: 1px;
}

.btn.assign-b {
    width: 224px;
}

.peaks {
    margin-top: 3px;
}

.peaks .tr {
    grid-template-columns: 38px 327px 89px 89px 88.500px 73px 73.500px 73.500px 86px;
}

.peaks .head {
    grid-template-columns: 38px 327px 89px 89px 88.500px 73px 73.500px 73.500px 86px 16px;
    height: 26px;
    margin-bottom: 3px;
}

.peaks .rows {
    grid-auto-rows: 33px;
}

/* D: bulk transfer */
.bulk {
    padding-top: 0;
}

.bulk-grid {
    display: grid;
    grid-template-columns: 484px 467px;
    grid-template-rows: 87px 97px 162px;
    gap: 10.500px 18px;
    margin: 6px 0 10px 10px;
}

.type-frame { padding: 0 0 0 9px; }
.which-frame { grid-column: 2; grid-row: 1 / 3; padding: 0 0 0 9px; }
.spectra-frame { grid-column: 1; grid-row: 2; padding: 0 0 0 21px; }
.spin-frame { padding: 0 0 0 21px; }
.merge-frame { padding: 0 0 0 21px; }

.spectra-frame legend,
.spin-frame legend,
.merge-frame legend {
    margin-left: 15px;
}

.opt-row {
    display: flex;
    align-items: center;
    height: 29px;
}

.type-frame .opt-label { width: 230px; }
.which-frame .opt-label { width: 204px; }

.opt-row .check {
    margin-bottom: 3px;
}

.radio-row {
    display: flex;
    align-items: center;
    height: 33.300px;
    margin-top: 0;
}

.radio {
    position: relative;
    flex-shrink: 0;
    box-sizing: border-box;
    width: 11px;
    height: 14px;
    margin: 0 9px 3px 0;
    border-radius: 50%;
    background-color: #c3a497;
    border-bottom: 1px solid #f8f8f8;
}

.radio.chosen::after {
    content: "";
    position: absolute;
    left: 3.500px;
    top: 4px;
    width: 4px;
    height: 4px;
    border-radius: 50%;
    background-color: #111;
}

.only-row {
    margin-top: 2px;
}

.only-pick {
    margin: 0 0 14px 44px;
}

.spin-label {
    width: 217px;
}

.spin-entry {
    width: 59px;
    height: 27px;
    margin-bottom: 20px;
}

.transfer {
    color: #2b2b2b;
}
```
